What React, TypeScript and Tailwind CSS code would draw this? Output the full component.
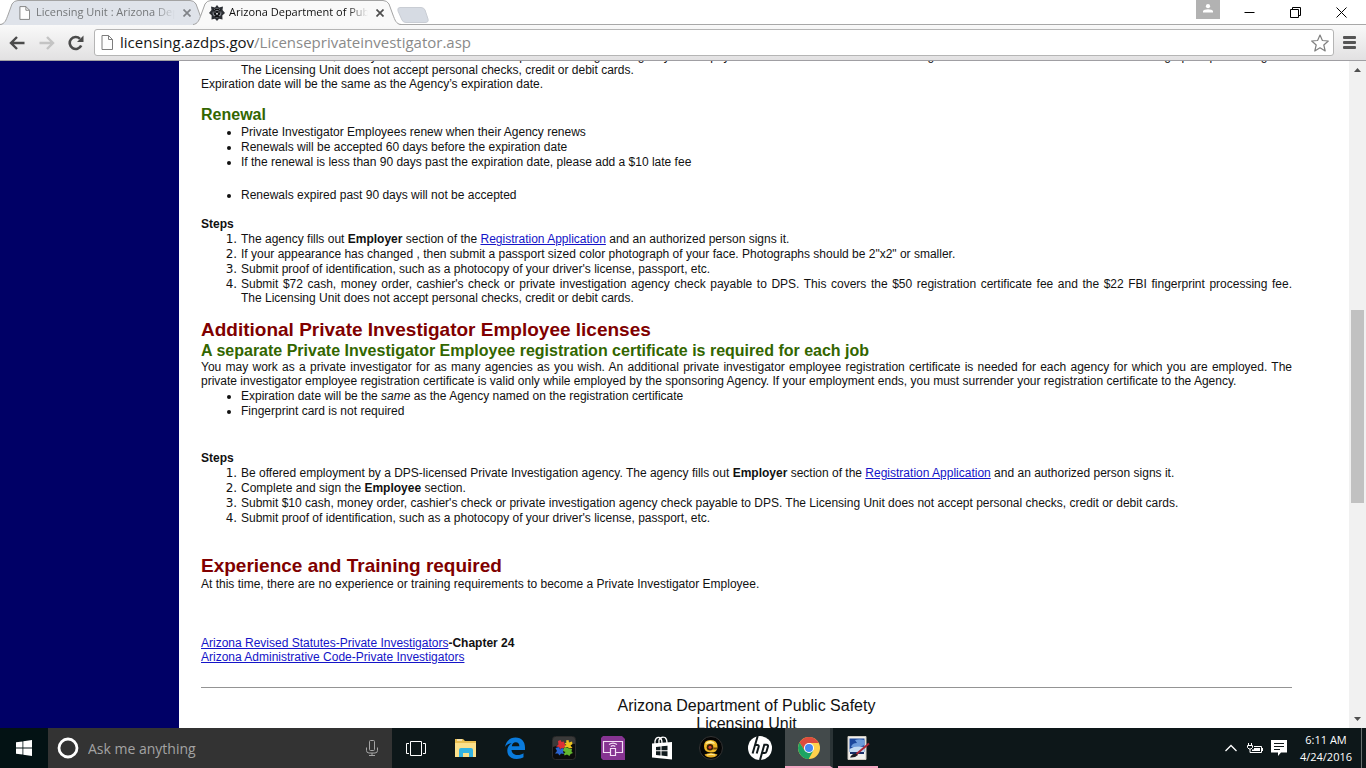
import type { ReactNode } from 'react';

function TabShape({ fill }: { fill: string }) {
  return (
    <svg className="absolute inset-0 h-full w-full" viewBox="0 0 208 25" preserveAspectRatio="none" aria-hidden="true">
      <path d="M0 25 C5 24 6 20 8 15 L12 4 Q14 .5 18 .5 H190 Q194 .5 196 4 L200 15 C202 20 203 24 208 25 Z" fill={fill} />
      <path d="M0 24.5 C5 24 6 20 8 15 L12 4 Q14 .5 18 .5 H190 Q194 .5 196 4 L200 15 C202 20 203 24 208 24.5" fill="none" stroke="#a3a3a3" />
    </svg>
  );
}

function PageIcon({ className }: { className: string }) {
  return (
    <svg className={className} viewBox="0 0 12 15" fill="#fdfdfd" stroke="#7d7d7d" aria-hidden="true">
      <path d="M1 .5H7.5L11.5 4.5V14.5H1Z" />
      <path d="M7.5 .5V4.5H11.5" fill="none" />
    </svg>
  );
}

function BadgeIcon() {
  return (
    <svg className="h-4 w-4 shrink-0" viewBox="0 0 16 16" aria-hidden="true">
      <path d="M8 0L10 2.5L14 1.5L13.5 5L16 8L13.3 10.5L13.5 14.5L10 13.8L8 16L6 13.8L2.5 14.5L2.7 10.5L0 8L2.5 5L2 1.5L6 2.5Z" fill="#2c2f34" />
      <circle cx="8" cy="8" r="4.4" fill="#8d9198" />
      <path d="M4 4.5L8 6L12 4.5L11 9.5L8 12L5 9.5Z" fill="#101216" />
      <path d="M6 4.5H10M5.5 11.5H10.5" stroke="#111" />
      <circle cx="8" cy="8.7" r="1" fill="#ddd" />
      <path d="M5.5 7H6.5M9.5 7H10.5" stroke="#ccc" />
    </svg>
  );
}

function CloseX() {
  return (
    <svg className="h-2 w-2" viewBox="0 0 8 8" stroke="currentColor" strokeWidth="1.7" aria-hidden="true">
      <path d="M.5 .5L7.5 7.5M7.5 .5L.5 7.5" />
    </svg>
  );
}

function Tab({ title, active, icon }: { title: string; active?: boolean; icon: ReactNode }) {
  return (
    <div className={active ? 'relative z-10 -ml-[15px] h-[25px] w-[208px]' : 'relative h-[25px] w-[208px]'}>
      <TabShape fill={active ? '#f9f9f9' : '#dfe3ea'} />
      <div className="relative flex h-full items-center gap-1 pr-[17px] pl-4">
        <span className="flex w-4 shrink-0 justify-center">{icon}</span>
        <span
          className={
            active
              ? 'min-w-0 flex-1 overflow-hidden text-[11px] whitespace-nowrap text-[#111] [mask-image:linear-gradient(to_right,black_85%,transparent)]'
              : 'min-w-0 flex-1 overflow-hidden text-[11px] whitespace-nowrap text-[#747779] [mask-image:linear-gradient(to_right,black_85%,transparent)]'
          }
        >
          {title}
        </span>
        <button aria-label="Close tab" className={active ? 'ml-1 text-[#4e4e4e]' : 'ml-1 text-[#808388]'}>
          <CloseX />
        </button>
      </div>
    </div>
  );
}

function TabStrip() {
  return (
    <div className="flex h-[25px] items-start bg-white">
      <div className="relative z-10 flex">
        <Tab title="Licensing Unit : Arizona Department" icon={<PageIcon className="h-[14px] w-[11px]" />} />
        <Tab title="Arizona Department of Public Safety" active icon={<BadgeIcon />} />
        <button aria-label="New tab" className="-ml-1 mt-1">
          <svg className="h-[18px] w-8" viewBox="0 0 32 18" aria-hidden="true">
            <path d="M3 1.5H24Q27 1.5 28 4L31 13Q32 16.5 28 16.5H9Q6 16.5 5 14L1 5Q0 1.5 3 1.5Z" fill="#d6dbe3" stroke="#c9cdd4" />
          </svg>
        </button>
      </div>
      <div className="flex-1" />
      <button aria-label="User" className="flex h-[19px] w-6 items-start justify-center bg-[#b2b2b2] pt-1">
        <svg className="h-[9px] w-[10px]" viewBox="0 0 10 9" fill="white" aria-hidden="true">
          <circle cx="5" cy="2.2" r="2.1" />
          <path d="M0 8.5V7Q1 5.2 5 5.2T10 7V8.5Z" />
        </svg>
      </button>
      <div className="flex h-6 w-[146px] pr-[2px] pl-[6px]">
        <button aria-label="Minimize" className="flex flex-1 items-center justify-center">
          <svg className="h-[11px] w-[11px]" viewBox="0 0 11 11" stroke="black" aria-hidden="true">
            <path d="M.5 5.5H10.5" />
          </svg>
        </button>
        <button aria-label="Restore" className="flex flex-1 items-center justify-center">
          <svg className="h-[11px] w-[11px]" viewBox="0 0 11 11" fill="none" stroke="black" aria-hidden="true">
            <path d="M.5 2.5H8.5V10.5H.5ZM2.5 2.5V.5H10.5V8.5H8.5" />
          </svg>
        </button>
        <button aria-label="Close" className="flex flex-1 items-center justify-center">
          <svg className="h-[11px] w-[11px]" viewBox="0 0 11 11" stroke="black" aria-hidden="true">
            <path d="M.5 .5L10.5 10.5M10.5 .5L.5 10.5" />
          </svg>
        </button>
      </div>
    </div>
  );
}

function Toolbar() {
  return (
    <div className="-mt-px flex h-[37px] items-center border-t border-b border-t-[#a8a8a8] border-b-[#a09fa3] bg-linear-to-b from-[#f9f9f9] to-[#e2e1e2] pl-[9px]">
      <button aria-label="Back">
        <svg className="h-4 w-4" viewBox="0 0 16 16" fill="none" stroke="#4b4b4b" strokeWidth="2.4" aria-hidden="true">
          <path d="M15.5 8H2.5M8 2L2 8L8 14" />
        </svg>
      </button>
      <button aria-label="Forward" className="ml-[14px]">
        <svg className="h-4 w-4" viewBox="0 0 16 16" fill="none" stroke="#c4c4c4" strokeWidth="2.4" aria-hidden="true">
          <path d="M.5 8H13.5M8 2L14 8L8 14" />
        </svg>
      </button>
      <button aria-label="Reload" className="ml-[13px]">
        <svg className="h-4 w-4" viewBox="0 0 16 16" fill="none" aria-hidden="true">
          <path d="M13.2 10.5A6 6 0 1 1 12 3.8" stroke="#4b4b4b" strokeWidth="2.6" />
          <path d="M15.5 .5V7H9Z" fill="#4b4b4b" />
        </svg>
      </button>
      <div className="ml-[10px] flex h-[27px] min-w-0 flex-1 items-center rounded-[3px] border border-[#b5b5b5] bg-white px-[6px]">
        <PageIcon className="h-[15px] w-3 shrink-0" />
        <div className="ml-[7px] flex-1 text-[15px] whitespace-nowrap text-[#8a8a8a]">
          <span className="text-[#161616]">licensing.azdps.gov</span>/Licenseprivateinvestigator.asp
        </div>
        <button aria-label="Bookmark this page" className="-mr-[2px]">
          <svg className="h-[18px] w-[18px]" viewBox="0 0 18 18" fill="white" stroke="#808080" strokeWidth="1.2" strokeLinejoin="round" aria-hidden="true">
            <path d="M9 1L11.4 6.5L17.3 7L12.8 11L14.2 17L9 13.8L3.8 17L5.2 11L.7 7L6.6 6.5Z" />
          </svg>
        </button>
      </div>
      <button aria-label="Menu" className="mr-[10px] ml-[9px]">
        <svg className="h-[13px] w-[13px]" viewBox="0 0 13 13" fill="#555" aria-hidden="true">
          <rect width="13" height="3" rx="1" />
          <rect y="5" width="13" height="3" rx="1" />
          <rect y="10" width="13" height="3" rx="1" />
        </svg>
      </button>
    </div>
  );
}

function PageLink({ children }: { children: ReactNode }) {
  return (
    <a href="#" className="text-[#1414c8] underline">
      {children}
    </a>
  );
}

function Bullets({ items }: { items: ReactNode[] }) {
  return (
    <ul className="list-disc pl-10">
      {items.map((item, i) => (
        <li key={i} className="pt-px">
          {item}
        </li>
      ))}
    </ul>
  );
}

function Steps({ items }: { items: ReactNode[] }) {
  return (
    <>
      <p className="font-bold">Steps</p>
      <ol className="list-decimal pl-10">
        {items.map((item, i) => (
          <li key={i} className="pt-px marker:font-['DejaVu_Sans',sans-serif]">
            {item}
          </li>
        ))}
      </ol>
    </>
  );
}

const FEE_TEXT =
  "Submit $72 cash, money order, cashier's check or private investigation agency check payable to DPS. This covers the $50 registration certificate fee and the $22 FBI fingerprint processing fee. The\u00a0Licensing Unit does not accept personal checks, credit or debit cards.";

function Content() {
  return (
    <main className="min-w-0 flex-1 overflow-hidden bg-white pr-[57px] pl-[22px] font-['Liberation_Sans',Arial,sans-serif] text-[12px] leading-[14px] text-[#111]">
      <div className="-mt-3 text-justify">
        <p className="pl-10">{FEE_TEXT}</p>
        <p>Expiration date will be the same as the Agency’s expiration date.</p>

        <h3 className="mt-[14px] text-[16px] leading-[19px] font-bold text-[#336600]">Renewal</h3>
        <Bullets
          items={[
            'Private Investigator Employees renew when their Agency renews',
            'Renewals will be accepted 60 days before the expiration date',
            'If the renewal is less than 90 days past the expiration date, please add a $10 late fee',
          ]}
        />
        <div className="mt-[18px] mb-[15px]">
          <Bullets items={['Renewals expired past 90 days will not be accepted']} />
        </div>
        <Steps
          items={[
            <>
              The agency fills out <b>Employer</b> section of the <PageLink>Registration Application</PageLink> and an
              authorized person signs it.
            </>,
            'If your appearance has changed , then submit a passport sized color photograph of your face. Photographs should be 2"x2" or smaller.',
            "Submit proof of identification, such as a photocopy of your driver's license, passport, etc.",
            FEE_TEXT,
          ]}
        />

        <h2 className="mt-[14px] text-[19px] leading-[22px] font-bold text-[#800000]">
          Additional Private Investigator Employee licenses
        </h2>
        <h3 className="text-[16px] leading-[19px] font-bold text-[#336600]">
          A separate Private Investigator Employee registration certificate is required for each job
        </h3>
        <p>
          You may work as a private investigator for as many agencies as you wish. An additional private investigator
          employee registration certificate is needed for each agency for which you are employed. The private
          investigator employee registration certificate is valid only while employed by the sponsoring Agency. If your
          employment ends, you must surrender your registration certificate to the Agency.
        </p>
        <Bullets
          items={[
            <>
              Expiration date will be the <i>same</i> as the Agency named on the registration certificate
            </>,
            'Fingerprint card is not required',
          ]}
        />
        <div className="mt-[33px]">
          <Steps
            items={[
              <>
                Be offered employment by a DPS-licensed Private Investigation agency. The agency fills out{' '}
                <b>Employer</b> section of the <PageLink>Registration Application</PageLink> and an authorized person
                signs it.
              </>,
              <>
                Complete and sign the <b>Employee</b> section.
              </>,
              "Submit $10 cash, money order, cashier's check or private investigation agency check payable to DPS. The Licensing Unit does not accept personal checks, credit or debit cards.",
              "Submit proof of identification, such as a photocopy of your driver's license, passport, etc.",
            ]}
          />
        </div>

        <h2 className="mt-[30px] text-[19px] leading-[22px] font-bold text-[#800000]">
          Experience and Training required
        </h2>
        <p>At this time, there are no experience or training requirements to become a Private Investigator Employee.</p>

        <p className="mt-[45px]">
          <PageLink>Arizona Revised Statutes-Private Investigators</PageLink>
          <b>-Chapter 24</b>
        </p>
        <p>
          <PageLink>Arizona Administrative Code-Private Investigators</PageLink>
        </p>

        <hr className="mt-[23px] border-t border-[#949494]" />
        <footer className="mt-[9px] text-center text-[16px] leading-[18px]">
          <p>Arizona Department of Public Safety</p>
          <p>Licensing Unit</p>
        </footer>
      </div>
    </main>
  );
}

function Scrollbar() {
  return (
    <div className="flex w-[17px] flex-col items-center bg-[#f1f1f1] py-[7px]" aria-hidden="true">
      <svg className="h-1 w-[7px]" viewBox="0 0 7 4" fill="#505050">
        <path d="M0 4L3.5 0L7 4Z" />
      </svg>
      <div className="flex w-full flex-1 flex-col pl-[2px]">
        <div className="flex-[238]" />
        <div className="mr-[2px] flex-[193] bg-[#c1c1c1]" />
        <div className="flex-[214]" />
      </div>
      <svg className="h-1 w-[7px]" viewBox="0 0 7 4" fill="#505050">
        <path d="M0 0L3.5 4L7 0Z" />
      </svg>
    </div>
  );
}

function FolderIcon() {
  return (
    <svg className="h-[22px] w-[22px]" viewBox="0 0 22 22" aria-hidden="true">
      <path d="M0 2H8L10 4H21V19H0Z" fill="#e9bf52" />
      <path d="M0 6H21V20H0Z" fill="#fbe08b" />
      <path d="M4 20V13Q4 11 6 11H16Q18 11 18 13V20H14V16H8V20Z" fill="#32b3e2" />
      <path d="M2 3H7" stroke="#fff" />
    </svg>
  );
}

function EdgeIcon() {
  return (
    <svg className="h-[22px] w-[22px]" viewBox="0 0 22 22" fill="#0a7bdc" aria-hidden="true">
      <path d="M1 10C2 4 6 .5 11.5 .5C18 .5 21 5 21 10.5V13H7.5C7.8 16.5 10.5 18 13.5 18C16 18 18 17.2 19.5 16.2V20.3C17.5 21.4 15.3 22 12.7 22C7 22 3.3 18.8 3.3 13.7C3.3 10.3 5 7.8 7.8 6.2C4.8 6.3 2.5 7.8 1 10ZM7.8 9.2H15.4C15.3 6.7 14 5.3 11.8 5.3C9.6 5.3 8.2 6.9 7.8 9.2Z" />
    </svg>
  );
}

function PuzzleIcon() {
  return (
    <svg className="h-6 w-6" viewBox="0 0 24 24" aria-hidden="true">
      <rect x=".5" y=".5" width="23" height="23" rx="3" fill="#0c0c0c" stroke="#2c2c2c" />
      <path d="M1 3Q1 1 3 1H21Q23 1 23 3V8Q12 6 1 11Z" fill="#3a3a3a" />
      <path d="M6 5L8.5 4L9.5 6L12 5.5L12.5 8L14.5 9L12.5 10.5L12 12.5L9.5 12L8 13.5L7 11L4 10.5L6.5 8.5Z" fill="#dd2f35" />
      <path d="M14 4.5L16.5 4L17 6.5L20 5.5L20.5 8L18.5 9.5L20.5 12L17.5 12.5L15.5 11L12.5 12L12.5 10L14.5 9L12.5 7.5L14.5 6.5Z" fill="#ecc21f" />
      <path d="M3.5 12L7 11L8 13.5L10 12L12 13L11 15.5L12 18L9 17.5L7.5 19.5L6 17.5L3 17.5L5 15Z" fill="#2b64cf" />
      <path d="M12 12L15.5 11.5L17.5 13L20 13L19.5 15.5L21 17L18.5 18L17.5 20L15 18.5L12.5 19.5L12 17.5L13.5 16L11 15Z" fill="#63b62f" />
    </svg>
  );
}

function ConnectIcon() {
  return (
    <svg className="h-6 w-6" viewBox="0 0 24 24" fill="none" stroke="#f4dff6" strokeWidth="1.2" aria-hidden="true">
      <path d="M2 0H21L24 3V24H2L0 22V2Z" fill="#863492" stroke="none" />
      <path d="M9 16.5H2.5V5.5H21.5V16.5H15" />
      <path d="M9.5 12.5H14.5V19.5H9.5Z" />
      <path d="M9.7 10.4Q12 8.8 14.3 10.4M8 8.6Q12 5.8 16 8.6" />
    </svg>
  );
}

function StoreIcon() {
  return (
    <svg className="h-[24px] w-[22px]" viewBox="0 0 22 24" aria-hidden="true">
      <path d="M4 8V5Q5 1 8 1.5Q11 2 11 7M8 7V4Q10 0 14 1.5Q16 3 16 7" fill="none" stroke="white" strokeWidth="1.3" />
      <path d="M1 7.5L21 6V23.5L1 21.5Z" fill="white" />
      <path d="M5 11L9.5 10.5V14.3H5ZM10.5 10.3L16.5 9.7V14.3H10.5ZM5 15.3H9.5V19.5L5 19ZM10.5 15.3H16.5V20.3L10.5 19.6Z" fill="#101b1e" />
    </svg>
  );
}

function WebcamIcon() {
  return (
    <svg className="h-6 w-6" viewBox="0 0 24 24" aria-hidden="true">
      <circle cx="12" cy="12" r="11.5" fill="#050505" stroke="#343434" />
      <path d="M5.5 18.5Q12 15.5 18.5 18.5Q17 21.5 12 21.5T5.5 18.5Z" fill="#e9ae22" />
      <path d="M8 19Q12 17.5 16 19" stroke="#fff0a8" fill="none" />
      <path d="M5 10Q5 4 11.5 4Q18.5 4 18.5 11Q18.5 16.5 12 16.5Q5 16.5 5 10Z" fill="#f0b926" />
      <path d="M6.5 8Q8 4.5 12 5Q15 5.5 16 8Q11 6.5 6.5 8Z" fill="#ffec9a" />
      <circle cx="11" cy="11.3" r="3.3" fill="#3b1d08" />
      <circle cx="11" cy="11.3" r="1.5" fill="#d8412a" />
      <path d="M14.5 11.5H18.5L17.5 13.5H14Z" fill="#6f4b0d" />
    </svg>
  );
}

function HpIcon() {
  return (
    <svg className="h-6 w-6" viewBox="0 0 24 24" aria-hidden="true">
      <circle cx="12" cy="12" r="12" fill="white" />
      <path d="M9.7 0L4.6 17.5M6.8 9H9.2Q11.2 9 10.6 11L8.7 17.5" fill="none" stroke="#10191b" strokeWidth="2" />
      <path d="M12 24L16.3 8.8H18.5Q20.5 8.8 19.9 10.8L18.5 15.5Q18 17 16.5 17H14.2" fill="none" stroke="#10191b" strokeWidth="2" />
    </svg>
  );
}

function ChromeIcon() {
  return (
    <svg className="h-[22px] w-[22px]" viewBox="0 0 22 22" aria-hidden="true">
      <circle cx="11" cy="11" r="11" fill="#ffd14c" />
      <path d="M1.5 5.5A11 11 0 0 1 20.5 5.5L20.8 6H11L6.7 13.5Z" fill="#dd4b3e" />
      <path d="M1.5 5.5A11 11 0 0 0 10.7 22L15.4 13.5L6.7 13.5Z" fill="#1da362" />
      <circle cx="11" cy="11" r="5" fill="white" />
      <circle cx="11" cy="11" r="4" fill="#4587f3" />
    </svg>
  );
}

function PaintIcon() {
  return (
    <svg className="h-6 w-6" viewBox="0 0 24 24" aria-hidden="true">
      <path d="M2 .5H20V23.5H2Z" fill="#f2f1ee" stroke="#cfcac1" />
      <path d="M3.5 2.5H18.5V16H3.5Z" fill="#1b479c" />
      <path d="M9 4Q13 2.5 18.5 4V9Q13 12 5 11Q6 7 11 7Z" fill="#6d9bdb" />
      <path d="M3.5 13Q9 9.5 18.5 11V16H3.5Z" fill="#c3dbf3" />
      <path d="M4 16H18V18H4Z" fill="#18306a" />
      <path d="M4 21.5Q6 17 11 17.5L12 19Q9 22 4 21.5Z" fill="#1d1c22" />
      <path d="M10.5 18L23 7.5" stroke="#a92737" strokeWidth="2" />
    </svg>
  );
}

const APPS = [
  { name: 'File Explorer', icon: <FolderIcon /> },
  { name: 'Microsoft Edge', icon: <EdgeIcon /> },
  { name: 'Puzzle', icon: <PuzzleIcon /> },
  { name: 'Connect', icon: <ConnectIcon /> },
  { name: 'Store', icon: <StoreIcon /> },
  { name: 'Webcam', icon: <WebcamIcon /> },
  { name: 'HP', icon: <HpIcon /> },
];

function Taskbar() {
  return (
    <div className="flex h-10 shrink-0 bg-[#0d1719] text-white">
      <button aria-label="Start" className="flex w-12 items-center justify-center bg-[#031214]">
        <svg className="h-4 w-4" viewBox="0 0 16 16" fill="white" aria-hidden="true">
          <path d="M0 2.3L6.5 1.4V7.5H0ZM7.3 1.2L16 0V7.5H7.3ZM0 8.4H6.5V14.6L0 13.7ZM7.3 8.4H16V16L7.3 14.7Z" />
        </svg>
      </button>
      <label className="flex w-[344px] items-center bg-[#333] pr-[14px] pl-[9px]">
        <svg className="h-[22px] w-[22px] shrink-0" viewBox="0 0 22 22" fill="none" aria-hidden="true">
          <circle cx="11" cy="11" r="9" stroke="white" strokeWidth="2.8" />
        </svg>
        <input
          aria-label="Search"
          placeholder="Ask me anything"
          className="ml-[9px] min-w-0 flex-1 bg-transparent text-[14px] outline-none placeholder:text-[#a3a3a3]"
        />
        <svg className="h-4 w-3" viewBox="0 0 12 16" fill="none" stroke="#a5a5a5" aria-hidden="true">
          <rect x="3.5" y=".5" width="5" height="10" rx="1" />
          <path d="M.5 7.5V10.5Q.5 13 3 13H9Q11.5 13 11.5 10.5V7.5M6 13V15.5M3 15.5H9" />
        </svg>
      </label>
      <button aria-label="Task View" className="flex w-12 items-center justify-center">
        <svg className="h-[15px] w-5" viewBox="0 0 20 15" fill="none" stroke="white" aria-hidden="true">
          <path d="M4.5 .5H15.5V14.5H4.5ZM3 2.5H.5V12.5H3M17 2.5H19.5V12.5H17" />
        </svg>
      </button>
      <div className="ml-[2px] flex gap-px">
        {APPS.map((app) => (
          <button key={app.name} aria-label={app.name} className="flex w-12 items-center justify-center">
            {app.icon}
          </button>
        ))}
        <button
          aria-label="Google Chrome"
          className="flex w-12 items-center justify-center border-r-[3px] border-b-2 border-r-[#2b3436] border-b-[#f3a6c2] bg-[#434a4b] pt-[2px] pl-[3px]"
        >
          <ChromeIcon />
        </button>
        <button aria-label="Paint" className="mx-1 flex w-10 items-center justify-center border-b-2 border-[#f3a6c2] pt-[2px]">
          <PaintIcon />
        </button>
      </div>
      <div className="flex-1" />
      <div className="flex items-center gap-3">
        <button aria-label="Show hidden icons" className="-mr-[2px]">
          <svg className="h-2 w-3" viewBox="0 0 12 8" fill="none" stroke="white" strokeWidth="1.3" aria-hidden="true">
            <path d="M.5 7L6 1.5L11.5 7" />
          </svg>
        </button>
        <button aria-label="Battery">
          <svg className="h-[11px] w-4" viewBox="0 0 16 11" fill="none" stroke="white" aria-hidden="true">
            <path d="M1.5 0V2M4.5 0V2M.5 2.5H5.5V4.5L4 6H2L.5 4.5ZM3 6V9.5H14.5V3.5H7M15.5 5V8" />
            <path d="M7 5H13V8H5V6.5H7Z" fill="white" stroke="none" />
          </svg>
        </button>
        <button aria-label="Notifications" className="-ml-1">
          <svg className="h-4 w-4" viewBox="0 0 16 16" aria-hidden="true">
            <path d="M0 0H16V12.5H10L7 16V12.5H0Z" fill="white" />
            <path d="M3 3.5H13M3 6.5H13M3 9.5H9" stroke="#101719" />
          </svg>
        </button>
        <div className="w-[54px] text-center text-[11px] leading-[17px] whitespace-nowrap">
          <p>6:11 AM</p>
          <p>4/24/2016</p>
        </div>
      </div>
      <button aria-label="Show desktop" className="ml-2 w-[5px] border-l border-[#68706f]" />
    </div>
  );
}

export default function App() {
  return (
    <div className="flex h-screen flex-col overflow-hidden bg-white font-['Open_Sans','Noto_Sans',sans-serif]">
      <header className="shrink-0">
        <TabStrip />
        <Toolbar />
      </header>
      <div className="flex min-h-0 flex-1">
        <aside className="w-[179px] shrink-0 bg-[#000066]" />
        <Content />
        <Scrollbar />
      </div>
      <Taskbar />
    </div>
  );
}
